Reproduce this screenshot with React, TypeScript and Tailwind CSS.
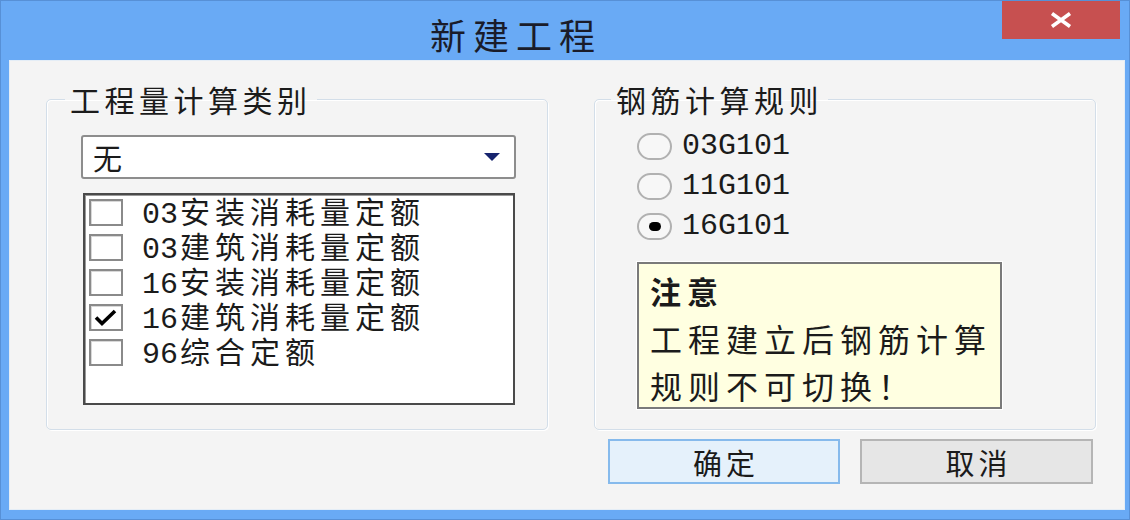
import { ReactNode } from "react";

const items = [
  { num: "03", name: "安装消耗量定额", checked: false },
  { num: "03", name: "建筑消耗量定额", checked: false },
  { num: "16", name: "安装消耗量定额", checked: false },
  { num: "16", name: "建筑消耗量定额", checked: true },
  { num: "96", name: "综合定额", checked: false },
];

const rules = [
  { label: "03G101", selected: false },
  { label: "11G101", selected: false },
  { label: "16G101", selected: true },
];

function GroupBox({
  title,
  legendClass,
  children,
}: {
  title: string;
  legendClass: string;
  children: ReactNode;
}) {
  return (
    <fieldset className="h-[345px] rounded-[5px] border border-[#d3dee9] shadow-[inset_1px_1px_0_#ffffff,1px_1px_0_#ffffff]">
      <legend
        className={`text-[30px] leading-[28px] tracking-[4.5px] text-[#1b1b1b] ${legendClass}`}
      >
        {title}
      </legend>
      {children}
    </fieldset>
  );
}

function CheckBox({ checked }: { checked: boolean }) {
  return (
    <div className="w-[34px] h-[27px] shrink-0 border-2 border-[#8a8a8a] bg-white shadow-[inset_1px_1px_0_#d8d8d8]">
      {checked && (
        <svg width="30" height="23" viewBox="0 0 30 23">
          <path
            d="M5 11.5 L11 17.5 L24 5"
            fill="none"
            stroke="#000"
            strokeWidth="3.6"
          />
        </svg>
      )}
    </div>
  );
}

function Radio({ selected }: { selected: boolean }) {
  return (
    <div className="w-[35px] h-[27px] shrink-0 rounded-full border-2 border-[#b1b1b1] bg-[#f7f7f7] flex items-center justify-center">
      {selected && <div className="w-[12px] h-[9px] rounded-full bg-black" />}
    </div>
  );
}

export default function App() {
  return (
    <div className="w-[1130px] h-[520px] bg-[#69aaf5] border border-[#5790d6] flex flex-col font-['Noto_Sans_CJK_SC',sans-serif] text-[#1b1b1b]">
      {/* title bar */}
      <div className="h-[59px] flex items-start">
        <div className="flex-1 pl-[429px] pt-[13px] text-[36px] leading-[40px] tracking-[7px] text-[#1a1c2a]">
          新建工程
        </div>
        <div className="w-[118px] h-[38px] mr-[9px] bg-[#c75050] flex items-center justify-center">
          <svg width="24" height="16" viewBox="0 0 24 16">
            <path
              d="M3 1.5 L21 14.5 M21 1.5 L3 14.5"
              stroke="#ffffff"
              strokeWidth="3.6"
              fill="none"
            />
          </svg>
        </div>
      </div>

      {/* client area */}
      <div className="ml-[8px] mr-[4px] mb-[9px] flex-1 bg-[#f4f4f4] border border-[#e4edf6] pl-[36px] pt-[24px]">
        <div className="grid grid-cols-[502px_502px] gap-x-[46px]">
          <GroupBox title="工程量计算类别" legendClass="ml-[18px] px-[5px]">
            <div className="pl-[34px] pr-[31px] pt-[22px]">
              <div className="h-[44px] rounded-[3px] border-2 border-[#8d8d8d] bg-white flex items-center justify-between pl-[10px] pr-[14px]">
                <span className="text-[29px] leading-[40px]">无</span>
                <svg width="16" height="8" viewBox="0 0 16 8">
                  <polygon points="0,0 16,0 8,8" fill="#17246e" />
                </svg>
              </div>
              <div className="mt-[14px] ml-[2px] mr-[1px] h-[212px] border-2 border-[#4a4a4a] shadow-[inset_1px_1px_0_#9a9a9a] bg-white pl-[4px]">
                {items.map((it, i) => (
                  <div key={i} className="h-[35px] flex items-center">
                    <CheckBox checked={it.checked} />
                    <div className="ml-[19px] flex items-baseline text-[30px] leading-[35px] whitespace-nowrap">
                      <span className="mr-[2px] font-['Liberation_Mono',monospace]">
                        {it.num}
                      </span>
                      <span className="tracking-[5px]">{it.name}</span>
                    </div>
                  </div>
                ))}
              </div>
            </div>
          </GroupBox>

          <div className="flex flex-col">
            <GroupBox title="钢筋计算规则" legendClass="ml-[16px] px-[5px]">
              <div className="pl-[42px] pt-[13px]">
                {rules.map((r) => (
                  <div key={r.label} className="h-[40px] flex items-center">
                    <Radio selected={r.selected} />
                    <span className="ml-[10px] font-['Liberation_Mono',monospace] text-[30px] leading-[40px]">
                      {r.label}
                    </span>
                  </div>
                ))}
                <div className="mt-[16px] w-[365px] h-[147px] border-2 border-[#7a7a7a] shadow-[0_0_0_1px_#ffffff] bg-[#ffffe1] pl-[11px] pt-[3px]">
                  <div className="text-[31px] leading-[48px] font-bold tracking-[6px]">
                    注意
                  </div>
                  <div className="text-[32px] leading-[47px] tracking-[6px] whitespace-nowrap">
                    工程建立后钢筋计算
                  </div>
                  <div className="text-[32px] leading-[47px] tracking-[6px] whitespace-nowrap">
                    规则不可切换！
                  </div>
                </div>
              </div>
            </GroupBox>
            <div className="mt-[9px] pl-[14px] flex gap-[20px]">
              <button className="w-[232px] h-[45px] border-2 border-[#86baec] bg-[#e5f1fb] text-[29px] leading-[40px] tracking-[4px] pl-[4px]">
                确定
              </button>
              <button className="w-[233px] h-[45px] border-2 border-[#b5b5b5] bg-[#e6e6e6] text-[29px] leading-[40px] tracking-[4px] pl-[4px]">
                取消
              </button>
            </div>
          </div>
        </div>
      </div>
    </div>
  );
}
